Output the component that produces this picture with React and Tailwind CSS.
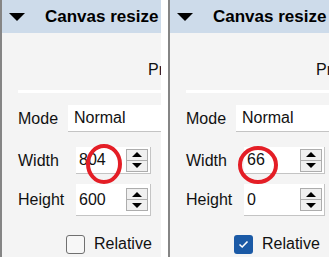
import React from 'react'

const font = { fontFamily: '"Liberation Sans", Arial, sans-serif' }

const Spinner = () => (
  <div className="flex flex-col w-[22px] h-[23px] border border-[#adadad] bg-[#f0f0f0]">
    <div className="flex-1 flex items-center justify-center border-b border-[#adadad]">
      <div className="w-0 h-0 border-l-[5px] border-r-[5px] border-b-[5px] border-l-transparent border-r-transparent border-b-black" />
    </div>
    <div className="flex-1 flex items-center justify-center">
      <div className="w-0 h-0 border-l-[5px] border-r-[5px] border-t-[5px] border-l-transparent border-r-transparent border-t-black" />
    </div>
  </div>
)

const NumberField = ({ value, width, h }) => (
  <div
    className={`flex items-center justify-between bg-white border-b border-r border-[#c4c4c4] pl-[3px] pr-[2px] ${h}`}
    style={{ width }}
  >
    <span className="text-[16px] text-[#111]">{value}</span>
    <Spinner />
  </div>
)

const Panel = ({ width, height, checked, inputW, circle }) => (
  <div className="relative w-[161px] h-[257px] shrink-0 overflow-hidden border-l-2 border-[#858585] bg-[#f4f4f4]" style={font}>
    {/* header */}
    <div className="h-[33px] bg-[#cddbea] flex items-center whitespace-nowrap">
      <div className="ml-[7px] w-0 h-0 border-l-[8px] border-r-[8px] border-t-[8px] border-l-transparent border-r-transparent border-t-black" />
      <span className="ml-[20px] text-[17px] font-bold text-black">Canvas resize</span>
    </div>

    {/* preset row */}
    <div className="pl-[146px] pt-[25px] h-[57px] text-[16px] text-[#111] whitespace-nowrap">Presets</div>
    <div className="ml-[16px] h-[3px] bg-white" />

    {/* mode */}
    <div className="flex items-center mt-[12px] h-[27px]">
      <span className="w-[50px] pl-[16px] text-[16px] text-[#111] box-content">Mode</span>
      <div className="flex-1 h-[27px] bg-white border-b border-[#c4c4c4] flex items-center pl-[6px] text-[16px] text-[#111] whitespace-nowrap">Normal</div>
    </div>

    {/* width */}
    <div className="flex items-center mt-[15px]">
      <span className="w-[58px] pl-[16px] text-[16px] text-[#111] box-content">Width</span>
      <NumberField value={width} width={inputW} h="h-[27px]" />
    </div>

    {/* height */}
    <div className="flex items-center mt-[10px]">
      <span className="w-[58px] pl-[16px] text-[16px] text-[#111] box-content">Height</span>
      <NumberField value={height} width={inputW} h="h-[32px]" />
    </div>

    {/* relative */}
    <div className="flex items-center mt-[16px] pl-[64px]">
      {checked ? (
        <div className="w-[19px] h-[19px] rounded-[3px] bg-[#1b5aa6] flex items-center justify-center">
          <svg width="11" height="9" viewBox="0 0 11 9">
            <path d="M1.5 4.5 L4.2 7 L9.5 1.5" fill="none" stroke="white" strokeWidth="1.6" />
          </svg>
        </div>
      ) : (
        <div className="w-[19px] h-[19px] rounded-[3px] border border-[#707070] bg-[#f7f7f7]" />
      )}
      <span className="ml-[9px] text-[16px] text-[#111]">Relative</span>
    </div>

    {/* red annotation circle */}
    <svg className="absolute left-0 top-0 pointer-events-none" width="161" height="257">
      <ellipse cx={circle.cx} cy={circle.cy} rx={circle.rx} ry={circle.ry} fill="none" stroke="#e41e26" strokeWidth="4" />
    </svg>
  </div>
)

export default function App() {
  return (
    <div className="w-[329px] h-[257px] bg-white flex gap-[7px] overflow-hidden">
      <Panel width="804" height="600" checked={false} inputW={75} circle={{ cx: 102, cy: 164, rx: 16, ry: 18 }} />
      <Panel width="66" height="0" checked inputW={81} circle={{ cx: 88, cy: 165, rx: 18, ry: 17 }} />
    </div>
  )
}
